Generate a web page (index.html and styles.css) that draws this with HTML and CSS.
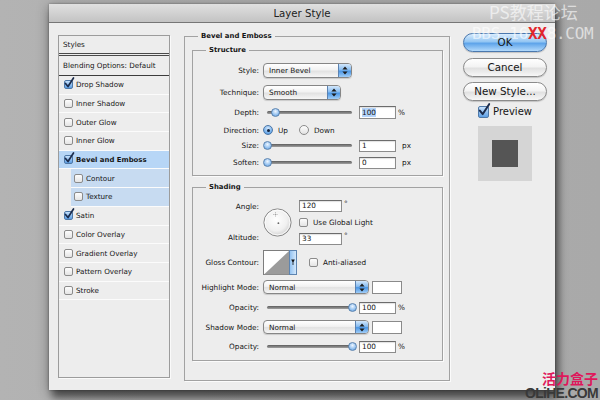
FILE: index.html
```html
<!DOCTYPE html>
<html>
<head>
<meta charset="utf-8">
<title>Layer Style</title>
<link rel="stylesheet" href="styles.css">
</head>
<body>
<div class="dialog">
  <div class="titlebar">Layer Style</div>
  <div class="content">
    <div class="styles-panel">
      <div class="sp-head">Styles</div>
      <div class="sp-blend">Blending Options: Default</div>
      <div class="sp-row"><span class="cb on"><svg class="tick" width="11" height="12" viewBox="0 0 11 12"><path d="M1.5 6.5 L4 9.5 L9.5 1" fill="none" stroke="#1b2b4b" stroke-width="1.7" stroke-linecap="round" stroke-linejoin="round"/></svg></span>Drop Shadow</div>
      <div class="sp-row"><span class="cb"></span>Inner Shadow</div>
      <div class="sp-row"><span class="cb"></span>Outer Glow</div>
      <div class="sp-row"><span class="cb"></span>Inner Glow</div>
      <div class="sp-row sel"><span class="cb on"><svg class="tick" width="11" height="12" viewBox="0 0 11 12"><path d="M1.5 6.5 L4 9.5 L9.5 1" fill="none" stroke="#1b2b4b" stroke-width="1.7" stroke-linecap="round" stroke-linejoin="round"/></svg></span>Bevel and Emboss</div>
      <div class="sp-sub">
        <div class="sp-row"><span class="cb"></span>Contour</div>
        <div class="sp-row"><span class="cb"></span>Texture</div>
      </div>
      <div class="sp-row"><span class="cb on"><svg class="tick" width="11" height="12" viewBox="0 0 11 12"><path d="M1.5 6.5 L4 9.5 L9.5 1" fill="none" stroke="#1b2b4b" stroke-width="1.7" stroke-linecap="round" stroke-linejoin="round"/></svg></span>Satin</div>
      <div class="sp-row"><span class="cb"></span>Color Overlay</div>
      <div class="sp-row"><span class="cb"></span>Gradient Overlay</div>
      <div class="sp-row"><span class="cb"></span>Pattern Overlay</div>
      <div class="sp-row"><span class="cb"></span>Stroke</div>
    </div>

    <fieldset class="group outer">
      <legend>Bevel and Emboss</legend>

      <fieldset class="group structure">
        <legend>Structure</legend>
        <div class="row r-style">
          <span class="lbl">Style:</span>
          <div class="popup w-style"><span class="val">Inner Bevel</span><span class="step"><svg width="6" height="9" viewBox="0 0 6 9"><path d="M3 0.5 L5.6 3.6 H0.4Z M3 8.5 L5.6 5.4 H0.4Z" fill="#1c1c1c"/></svg></span></div>
        </div>
        <div class="row r-tech">
          <span class="lbl">Technique:</span>
          <div class="popup w-tech"><span class="val">Smooth</span><span class="step"><svg width="6" height="9" viewBox="0 0 6 9"><path d="M3 0.5 L5.6 3.6 H0.4Z M3 8.5 L5.6 5.4 H0.4Z" fill="#1c1c1c"/></svg></span></div>
        </div>
        <div class="row r-depth">
          <span class="lbl">Depth:</span>
          <div class="slider"><div class="track"><span class="thumb" style="left:10%"></span></div></div>
          <div class="field"><span class="selected">100</span></div>
          <span class="unit">%</span>
        </div>
        <div class="row r-dir">
          <span class="lbl">Direction:</span>
          <span class="radio on"></span><span class="rtext">Up</span>
          <span class="radio off"></span><span class="rtext">Down</span>
        </div>
        <div class="row r-size">
          <span class="lbl">Size:</span>
          <div class="slider"><div class="track"><span class="thumb" style="left:0%"></span></div></div>
          <div class="field">1</div>
          <span class="unit px">px</span>
        </div>
        <div class="row r-soften">
          <span class="lbl">Soften:</span>
          <div class="slider"><div class="track"><span class="thumb" style="left:0%"></span></div></div>
          <div class="field">0</div>
          <span class="unit px">px</span>
        </div>
      </fieldset>

      <fieldset class="group shading">
        <legend>Shading</legend>
        <div class="angle">
          <span class="alabel a1">Angle:</span>
          <span class="alabel a3">Altitude:</span>
          <svg class="dial" width="29" height="29" viewBox="0 0 29 29">
            <defs>
              <radialGradient id="dg" cx="45%" cy="40%" r="62%">
                <stop offset="0" stop-color="#ffffff"/>
                <stop offset="0.65" stop-color="#f0f0f0"/>
                <stop offset="1" stop-color="#cdcdcd"/>
              </radialGradient>
            </defs>
            <circle cx="14.5" cy="14.5" r="13.6" fill="url(#dg)" stroke="#8a8a8a"/>
            <circle cx="14.5" cy="14.5" r="12.4" fill="none" stroke="#ffffff" stroke-opacity="0.8"/>
            <path d="M12.5 4.3v4.4M10.3 6.5h4.4" stroke="#999" stroke-width="0.8" stroke-dasharray="1 0.6"/>
            <circle cx="15.4" cy="15.2" r="0.9" fill="#666"/>
          </svg>
          <div class="aval a1"><div class="field wide">120</div><span class="deg">°</span></div>
          <div class="aval a2"><span class="cb"></span><span class="cbtext">Use Global Light</span></div>
          <div class="aval a3"><div class="field wide">33</div><span class="deg">°</span></div>
        </div>
        <div class="row r-contour">
          <span class="lbl">Gloss Contour:</span>
          <svg class="contour" width="34" height="25" viewBox="0 0 34 25">
            <defs>
              <linearGradient id="cg" x1="0" x2="1" y1="0" y2="0">
                <stop offset="0" stop-color="#8fc0f1"/>
                <stop offset="1" stop-color="#d9ebfc"/>
              </linearGradient>
            </defs>
            <rect x="0.5" y="0.5" width="33" height="24" fill="#ffffff" stroke="#7d7d7d"/>
            <polygon points="1,24.5 26,1 26,24.5" fill="#9b9b9b"/>
            <rect x="26.5" y="0.5" width="7" height="24" fill="url(#cg)" stroke="#5d84b0"/>
            <path d="M28.2 9.5h3.6l-1.8 3.6z M29.6 12h0.8v3h-0.8z" fill="#111"/>
          </svg>
          <span class="cb anti"></span><span class="cbtext">Anti-aliased</span>
        </div>
        <div class="row r-hmode">
          <span class="lbl">Highlight Mode:</span>
          <div class="popup small w-mode"><span class="val">Normal</span><span class="step"><svg width="6" height="9" viewBox="0 0 6 9"><path d="M3 0.5 L5.6 3.6 H0.4Z M3 8.5 L5.6 5.4 H0.4Z" fill="#1c1c1c"/></svg></span></div>
          <div class="swatch-color"></div>
        </div>
        <div class="row r-op1">
          <span class="lbl">Opacity:</span>
          <div class="slider"><div class="track"><span class="thumb" style="left:100%"></span></div></div>
          <div class="field">100</div>
          <span class="unit">%</span>
        </div>
        <div class="row r-smode">
          <span class="lbl">Shadow Mode:</span>
          <div class="popup small w-mode"><span class="val">Normal</span><span class="step"><svg width="6" height="9" viewBox="0 0 6 9"><path d="M3 0.5 L5.6 3.6 H0.4Z M3 8.5 L5.6 5.4 H0.4Z" fill="#1c1c1c"/></svg></span></div>
          <div class="swatch-color"></div>
        </div>
        <div class="row r-op2">
          <span class="lbl">Opacity:</span>
          <div class="slider"><div class="track"><span class="thumb" style="left:100%"></span></div></div>
          <div class="field">100</div>
          <span class="unit">%</span>
        </div>
      </fieldset>
    </fieldset>

    <div class="side">
      <div class="btn default">OK</div>
      <div class="btn">Cancel</div>
      <div class="btn">New Style...</div>
      <div class="preview"><span class="cb on big"><svg class="tick" width="13" height="14" viewBox="0 0 11 12"><path d="M1.5 6.5 L4 9.5 L9.5 1" fill="none" stroke="#1b2b4b" stroke-width="1.7" stroke-linecap="round" stroke-linejoin="round"/></svg></span><span>Preview</span></div>
      <div class="thumbbox"><div class="thumbsq"></div></div>
    </div>
  </div>
</div>

<div class="wm-top">
  <span class="wm-cn">PS教程论坛</span>
  <span class="wm-url">BBS.16<b>XX</b>8.COM</span>
</div>
<div class="wm-bottom">
  <span class="wm-cn2">活力盒子</span>
  <span class="wm-en">OLiHE.COM</span>
</div>
</body>
</html>
```

FILE: styles.css
```css
* { box-sizing: border-box; }

html, body { margin: 0; padding: 0; }

body {
  width: 600px;
  height: 400px;
  overflow: hidden;
  position: relative;
  padding: 4px 0 0 49px;
  background: linear-gradient(90deg, #b3b3b3 0%, #adadad 50%, #a9a9a9 100%);
  font-family: "DejaVu Sans", "Noto Sans", sans-serif;
  color: #151515;
}

.dialog {
  width: 506px;
  height: 386px;
  background: #ededed;
  display: flex;
  flex-direction: column;
  box-shadow: 3px 8px 8px rgba(0, 0, 0, 0.5), 0 2px 12px rgba(0, 0, 0, 0.3), 0 0 2px rgba(0, 0, 0, 0.35);
}

.titlebar {
  flex: none;
  height: 19px;
  background: linear-gradient(#e0e0e0, #c3c3c3);
  border-bottom: 1px solid #767676;
  text-align: center;
  font-size: 10.2px;
  line-height: 19px;
  color: #222;
}

.content {
  flex: 1;
  display: flex;
  align-items: flex-start;
  padding: 8px 8px 0 9px;
}

/* ---------- styles list ---------- */
.styles-panel {
  flex: none;
  width: 112px;
  height: 343px;
  margin-top: 4px;
  border: 1px solid #9c9c9c;
  background: #ededed;
  font-size: 7.2px;
  box-shadow: 1px 1px 0 #fafafa;
}

.sp-head {
  height: 20px;
  padding-left: 4px;
  line-height: 17px;
  border-bottom: 3px double #4a4a4a;
}

.sp-blend {
  height: 20px;
  padding-left: 4px;
  line-height: 19px;
  border-bottom: 1px solid #3c3c3c;
}

.sp-row {
  height: 18.7px;
  display: flex;
  align-items: center;
  gap: 3px;
  padding-left: 5px;
  border-bottom: 1px solid #fbfbfb;
}

.sp-row.sel {
  background: #b7d6f6;
  font-weight: bold;
  font-size: 6.9px;
}

.sp-sub {
  margin-left: 12px;
  background: #c7dbf1;
}

.sp-sub .sp-row { padding-left: 3px; }

/* checkbox */
.cb {
  flex: none;
  display: flex;
  width: 9px;
  height: 9px;
  border: 1px solid #8b8b8b;
  border-radius: 2px;
  background: linear-gradient(#fdfdfd, #e4e4e4);
}

.cb.on {
  background: linear-gradient(#c6e1fc, #5d9fe5);
  border-color: #4f79a8;
}

.cb .tick {
  flex: none;
  margin: -4px 0 0 -1px;
  overflow: visible;
}

.cb.big {
  width: 11px;
  height: 12px;
}

/* ---------- fieldsets ---------- */
fieldset.group {
  margin: 0;
  padding: 0;
  min-width: 0;
  border: 1px solid #a2a2a2;
  box-shadow: 1px 1px 0 #fbfbfb;
}

fieldset.group > legend {
  font-weight: bold;
  font-size: 6.9px;
  line-height: 10px;
  padding: 0 3px;
}

fieldset.outer {
  flex: none;
  width: 266px;
  margin-left: 14px;
  padding: 4px 6px 19px 7px;
}

fieldset.outer > legend { margin-left: 6px; }

fieldset.structure > legend,
fieldset.shading > legend { margin-left: 13px; }

fieldset.structure { padding: 7px 0 6px 0; }

fieldset.shading {
  margin-top: 6px;
  padding: 8px 0 7px 0;
}

.row {
  display: flex;
  align-items: center;
  font-size: 7.3px;
}

.lbl {
  flex: none;
  width: 66px;
  margin-right: 4px;
  text-align: right;
  white-space: nowrap;
}

.r-style { height: 16px; }
.r-tech { height: 16px; margin-top: 6px; }
.r-depth { height: 14px; margin-top: 5px; }
.r-dir { height: 14px; margin-top: 4px; }
.r-size { height: 13px; margin-top: 2px; }
.r-soften { height: 13px; margin-top: 4px; }

.r-contour { height: 25px; margin-top: 5px; }
.r-hmode { height: 14px; margin-top: 5px; }
.r-op1 { height: 13px; margin-top: 7px; }
.r-smode { height: 14px; margin-top: 6px; }
.r-op2 { height: 13px; margin-top: 6px; }

/* popup buttons */
.popup {
  flex: none;
  display: flex;
  height: 15px;
  border: 1px solid #868686;
  border-radius: 4px;
  overflow: hidden;
  background: linear-gradient(#ffffff, #f2f2f2 45%, #e2e2e2 55%, #f6f6f6);
  box-shadow: 0 1px 1px rgba(0, 0, 0, 0.15);
}

.popup.small { height: 14px; }

.popup .val {
  flex: 1;
  padding-left: 5px;
  line-height: 13px;
}

.popup .step {
  flex: none;
  width: 13px;
  display: flex;
  align-items: center;
  justify-content: center;
  border-left: 1px solid #5b82b1;
  background: linear-gradient(#d3e7fb, #86bcf1 45%, #4b96e4 55%, #a0cdf7);
}

.w-style { width: 89px; }
.w-tech { width: 78px; }
.w-mode { width: 106px; }

.swatch-color {
  flex: none;
  width: 30px;
  height: 13px;
  margin-left: 3px;
  background: #fff;
  border: 1px solid #8a8a8a;
}

/* sliders */
.slider {
  flex: none;
  width: 93px;
  padding: 0 4px;
  margin-right: 3px;
}

.track {
  position: relative;
  height: 3px;
  border-radius: 2px;
  background: linear-gradient(#5d5d5d, #a0a0a0);
}

.thumb {
  position: absolute;
  top: -3px;
  width: 9px;
  height: 9px;
  margin-left: -4.5px;
  border-radius: 50%;
  border: 1px solid #5a83b0;
  background: radial-gradient(circle at 50% 35%, #eef6ff, #93c1f0 60%, #5b95d4);
}

/* text fields */
.field {
  flex: none;
  width: 37px;
  height: 13px;
  padding-left: 2px;
  line-height: 11px;
  font-size: 7.3px;
  background: #fff;
  border: 1px solid #8c8c8c;
  border-top-color: #6c6c6c;
  box-shadow: inset 0 1px 1px rgba(0, 0, 0, 0.12);
}

.r-size .field,
.r-soften .field,
.r-op1 .field,
.r-op2 .field { height: 12px; line-height: 10px; }

.field.wide {
  width: 43px;
  height: 12px;
  line-height: 10px;
}

.selected { background: #b4d4fb; }

.unit { margin-left: 2px; }
.unit.px { margin-left: 6px; }

/* radios */
.radio {
  flex: none;
  width: 10px;
  height: 10px;
  border-radius: 50%;
  border: 1px solid #8b8b8b;
  background: linear-gradient(#fdfdfd, #e2e2e2);
  display: flex;
  align-items: center;
  justify-content: center;
}

.radio.on {
  border-color: #4d77a6;
  background: radial-gradient(circle at 50% 30%, #d6eafd, #6aa8e8 70%, #4a8ad2);
}

.radio.on::after {
  content: "";
  width: 3px;
  height: 3px;
  border-radius: 50%;
  background: #14233d;
}

.rtext { margin: 0 11px 0 5px; }

/* angle block */
.angle {
  display: grid;
  grid-template-columns: 70px 36px 1fr;
  grid-template-rows: 12px 20px 13px;
  font-size: 7.3px;
}

.alabel {
  grid-column: 1;
  padding-right: 4px;
  text-align: right;
  align-self: center;
}

.alabel.a1 { grid-row: 1; }
.alabel.a3 { grid-row: 3; margin-top: -3px; }

.dial {
  grid-column: 2;
  grid-row: 1 / 4;
  align-self: center;
}

.aval {
  grid-column: 3;
  display: flex;
  align-items: center;
}

.aval.a1 { grid-row: 1; }
.aval.a2 { grid-row: 2; }
.aval.a3 { grid-row: 3; }

.deg {
  margin-left: 2px;
  align-self: flex-start;
  line-height: 7px;
}

.cbtext { margin-left: 5px; }

.contour { flex: none; }

.cb.anti { margin-left: 12px; }

/* ---------- side column ---------- */
.side {
  flex: none;
  width: 84px;
  margin: 2px 0 0 13px;
  display: flex;
  flex-direction: column;
  align-items: center;
}

.btn {
  width: 84px;
  height: 19px;
  margin-bottom: 5.5px;
  border: 1px solid #8b8b8b;
  border-radius: 10px;
  text-align: center;
  font-size: 10.3px;
  line-height: 17px;
  background: linear-gradient(#ffffff, #f3f3f3 45%, #e1e1e1 55%, #f7f7f7);
  box-shadow: 0 1px 1px rgba(0, 0, 0, 0.18);
}

.btn.default {
  border-color: #4a78ae;
  background: linear-gradient(#d9ecfd, #94c6f3 45%, #5ea4ea 55%, #b2d9fb);
}

.preview {
  display: flex;
  align-items: center;
  gap: 4px;
  height: 12px;
  margin-top: -1px;
  font-size: 10px;
}

.thumbbox {
  width: 54px;
  height: 55px;
  margin-top: 8px;
  background: #d5d5d5;
  display: flex;
  align-items: center;
  justify-content: center;
}

.thumbsq {
  width: 26px;
  height: 27px;
  background: #555;
}

/* ---------- watermarks (overlaying the screenshot) ---------- */
.wm-top {
  position: absolute;
  left: 472px;
  top: 1px;
  color: rgba(255, 255, 255, 0.62);
}

.wm-cn {
  display: block;
  margin-left: 17px;
  font-family: "Noto Sans CJK SC", sans-serif;
  font-size: 17px;
  line-height: 22px;
}

.wm-url {
  display: block;
  margin-top: 3px;
  font-family: "DejaVu Sans Mono", monospace;
  font-size: 16px;
  letter-spacing: -0.3px;
  line-height: 16px;
}

.wm-url b { color: #e3252b; }

.wm-bottom {
  position: absolute;
  right: 2px;
  top: 371px;
  text-align: right;
}

.wm-cn2 {
  display: block;
  font-family: "Noto Sans CJK SC", sans-serif;
  font-weight: bold;
  font-size: 14px;
  line-height: 15px;
  color: #df175b;
}

.wm-en {
  display: block;
  margin-top: 1px;
  font-family: "Liberation Sans", sans-serif;
  font-weight: bold;
  font-size: 14px;
  line-height: 12px;
  letter-spacing: -0.7px;
  color: #393939;
}
```
